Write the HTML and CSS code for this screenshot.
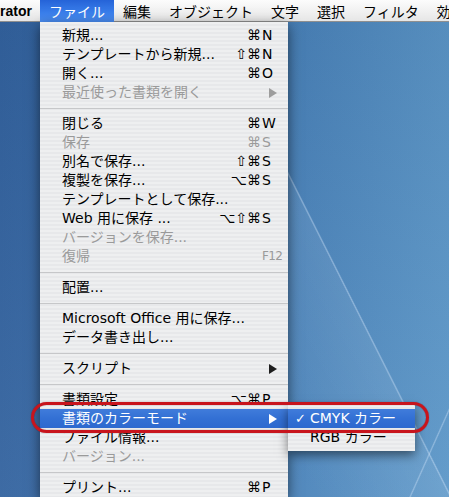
FILE: index.html
```html
<!DOCTYPE html>
<html lang="ja">
<head>
<meta charset="utf-8">
<title>ファイル メニュー</title>
<link rel="stylesheet" href="styles.css">
</head>
<body>
<div class="desktop">
  <div class="menubar">
    <span class="app">rator</span>
    <span class="title active">ファイル</span>
    <span class="title">編集</span>
    <span class="title">オブジェクト</span>
    <span class="title">文字</span>
    <span class="title">選択</span>
    <span class="title">フィルタ</span>
    <span class="title last">効</span>
  </div>
  <div class="stage">
    <div class="menu">
      <div class="item"><span class="label">新規...</span><span class="mods">⌘</span><span class="key">N</span></div>
      <div class="item"><span class="label">テンプレートから新規...</span><span class="mods">⇧⌘</span><span class="key">N</span></div>
      <div class="item"><span class="label">開く...</span><span class="mods">⌘</span><span class="key">O</span></div>
      <div class="item disabled"><span class="label">最近使った書類を開く</span><span class="key"><svg class="arrow" width="8" height="10" viewBox="0 0 8 10"><polygon points="0,0 8,5 0,10"/></svg></span></div>
      <div class="sep"></div>
      <div class="item"><span class="label">閉じる</span><span class="mods">⌘</span><span class="key">W</span></div>
      <div class="item disabled"><span class="label">保存</span><span class="mods">⌘</span><span class="key">S</span></div>
      <div class="item"><span class="label">別名で保存...</span><span class="mods">⇧⌘</span><span class="key">S</span></div>
      <div class="item"><span class="label">複製を保存...</span><span class="mods">⌥⌘</span><span class="key">S</span></div>
      <div class="item"><span class="label">テンプレートとして保存...</span></div>
      <div class="item"><span class="label">Web 用に保存 ...</span><span class="mods">⌥⇧⌘</span><span class="key">S</span></div>
      <div class="item disabled"><span class="label">バージョンを保存...</span></div>
      <div class="item disabled"><span class="label">復帰</span><span class="key fkey">F12</span></div>
      <div class="sep"></div>
      <div class="item"><span class="label">配置...</span></div>
      <div class="sep"></div>
      <div class="item"><span class="label">Microsoft Office 用に保存...</span></div>
      <div class="item"><span class="label">データ書き出し...</span></div>
      <div class="sep"></div>
      <div class="item"><span class="label">スクリプト</span><span class="key"><svg class="arrow" width="8" height="10" viewBox="0 0 8 10"><polygon points="0,0 8,5 0,10"/></svg></span></div>
      <div class="sep"></div>
      <div class="item"><span class="label">書類設定...</span><span class="mods">⌥⌘</span><span class="key">P</span></div>
      <div class="item selected"><span class="label">書類のカラーモード</span><span class="key"><svg class="arrow" width="8" height="10" viewBox="0 0 8 10"><polygon points="0,0 8,5 0,10"/></svg></span></div>
      <div class="item"><span class="label">ファイル情報...</span></div>
      <div class="item disabled"><span class="label">バージョン...</span></div>
      <div class="sep"></div>
      <div class="item"><span class="label">プリント...</span><span class="mods">⌘</span><span class="key">P</span></div>
    </div>
    <div class="submenu">
      <div class="sub-item selected"><span class="check">✓</span><span class="label">CMYK カラー</span></div>
      <div class="sub-item"><span class="check"></span><span class="label">RGB カラー</span></div>
    </div>
  </div>
  <div class="ring"></div>
</div>
</body>
</html>
```
FILE: styles.css
```css
html, body {
  margin: 0;
  padding: 0;
}

body {
  width: 449px;
  height: 497px;
  overflow: hidden;
  font-family: "DejaVu Sans", "Noto Sans CJK JP", sans-serif;
  font-size: 14px;
  color: #000;
}

.desktop {
  position: relative;
  width: 449px;
  height: 497px;
  overflow: hidden;
  background:
    linear-gradient(63.3deg, transparent 64.3%, rgba(215, 232, 252, 0.45) 64.5%, transparent 64.7%),
    linear-gradient(114.1deg, transparent 94.0%, rgba(215, 232, 252, 0.4) 94.2%, transparent 94.4%),
    linear-gradient(63.3deg, transparent 45%, rgba(255, 255, 255, 0.07) 64.4%, transparent 64.5%),
    linear-gradient(to bottom, rgba(0, 10, 40, 0.07), rgba(255, 255, 255, 0.05)),
    linear-gradient(to right, #33639f 0%, #3a6da8 30%, #4a83ba 65%, #5c97c8 100%);
}

/* menu bar */
.menubar {
  display: flex;
  height: 22px;
  line-height: 22px;
  white-space: nowrap;
  overflow: hidden;
  background: linear-gradient(to bottom, #fcfcfc 0, #f1f1f1 50%, #e6e6e6 21px, #8f8f8f 21px, #8f8f8f 22px);
  font-family: "Noto Sans CJK JP", sans-serif;
}

.app {
  flex: 0 0 40px;
  font-family: "Liberation Sans", sans-serif;
  font-weight: bold;
  font-size: 14px;
}

.title {
  flex: 0 0 auto;
  padding: 0 9px;
}

.title.last {
  padding-right: 0;
}

.title.active {
  color: #fff;
  background: linear-gradient(to bottom, #2563d8, #3b80ec 60%, #4a8cf0);
}

/* stage */
.stage {
  display: flex;
  align-items: flex-start;
}

.menu {
  margin-left: 40px;
  width: 248px;
  padding-top: 4px;
  background: repeating-linear-gradient(to bottom, #eeeff0 0, #eeeff0 2px, #e7e8ea 2px, #e7e8ea 4px);
  box-shadow: 0 4px 12px rgba(0, 0, 0, 0.55);
}

.item {
  display: flex;
  align-items: center;
  height: 19px;
  line-height: 19px;
  padding: 0 4px 0 22px;
  white-space: nowrap;
}

.item .label {
  flex: 1;
}

.mods {
  text-align: right;
  font-family: "DejaVu Sans", sans-serif;
}

.key {
  width: 22px;
  margin-left: 1px;
  font-family: "DejaVu Sans", sans-serif;
  display: flex;
  align-items: center;
}

.key .arrow {
  margin-left: 7px;
  fill: #1e1e1e;
}

.fkey {
  font-size: 12px;
  letter-spacing: -0.6px;
}

.item.disabled {
  color: #9a9a9a;
}

.item.disabled .arrow {
  fill: #9d9d9d;
}

.item.selected {
  color: #fff;
  background: linear-gradient(to bottom, #407cdb, #3370d4 50%, #2d69cf);
}

.item.selected .arrow {
  fill: #fff;
}

.sep {
  height: 12px;
  display: flex;
  align-items: center;
}

.sep::before {
  content: "";
  flex: 1;
  height: 1px;
  background: #c6c7c9;
}

/* submenu */
.submenu {
  margin-top: 383px;
  width: 127px;
  padding: 4px 0 4px;
  background: repeating-linear-gradient(to bottom, #eeeff0 0, #eeeff0 2px, #e7e8ea 2px, #e7e8ea 4px);
  box-shadow: 0 4px 10px rgba(0, 0, 0, 0.5);
}

.sub-item {
  display: flex;
  align-items: center;
  height: 19px;
  line-height: 19px;
  white-space: nowrap;
}

.sub-item.selected {
  color: #fff;
  background: linear-gradient(to bottom, #407cdb, #3370d4 50%, #2d69cf);
}

.check {
  width: 15px;
  padding-left: 7px;
  font-size: 13px;
  font-weight: bold;
  font-family: "DejaVu Sans", sans-serif;
}

/* annotation */
.ring {
  position: absolute;
  left: 31px;
  top: 402px;
  width: 392px;
  height: 25px;
  border: 3px solid #c8141c;
  border-radius: 16px;
  box-shadow: 0 0 1px rgba(80, 0, 0, 0.6), inset 0 0 1px rgba(80, 0, 0, 0.6);
}
```
